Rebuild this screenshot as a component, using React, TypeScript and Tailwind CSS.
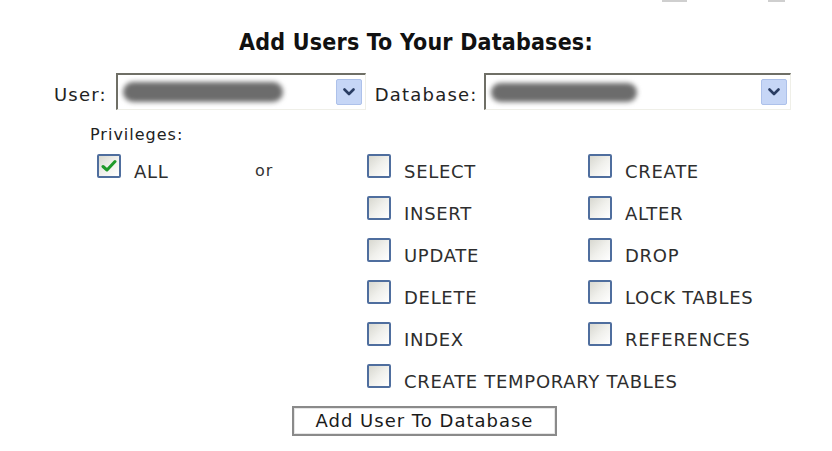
import React from "react";

const font = "[font-family:'DejaVu_Sans','Verdana',sans-serif]";

function Chevron() {
  return (
    <svg width="12" height="8" viewBox="0 0 12 8">
      <path d="M1.5 1.5 L6 6 L10.5 1.5" fill="none" stroke="#2a3d63" strokeWidth="2.6" strokeLinecap="round" strokeLinejoin="round" />
    </svg>
  );
}

function Select({ width, blob }: { width: string; blob: React.ReactNode }) {
  return (
    <div className={`relative h-[37px] ${width} bg-white border-t-2 border-l-2 border-r border-b border-t-[#6f6f66] border-l-[#6f6f66] border-r-[#efefe8] border-b-[#efefe8] flex items-center justify-between pl-[5px] pr-[3px]`}>
      {blob}
      <div className="w-[26px] h-[26px] bg-[#c6d6f6] border border-[#adc1ea] rounded-[2px] flex items-center justify-center">
        <Chevron />
      </div>
    </div>
  );
}

function Box({ checked }: { checked?: boolean }) {
  return (
    <div className="w-[24px] h-[24px] shrink-0 border-2 border-[#4f6e9e] rounded-[2px] bg-gradient-to-br from-[#d8d8d0] via-[#f0f0ec] to-white flex items-center justify-center">
      {checked && (
        <svg width="16" height="14" viewBox="0 0 16 14">
          <path d="M2 7.5 L6 11 L14 2.5" fill="none" stroke="#1f9a2a" strokeWidth="3" strokeLinecap="round" strokeLinejoin="round" />
        </svg>
      )}
    </div>
  );
}

function Item({ label, checked }: { label: string; checked?: boolean }) {
  return (
    <div className="flex items-start h-[42px]">
      <Box checked={checked} />
      <span className="ml-[13px] mt-[9px] text-[18px] leading-[18px] tracking-[0.7px] text-[#2e2e2e] whitespace-nowrap">{label}</span>
    </div>
  );
}

export default function App() {
  return (
    <div className={`relative w-[832px] h-[451px] bg-white overflow-hidden ${font}`}>
      <div className="absolute top-0 left-[662px] w-[25px] h-[2px] bg-[#cfcfcf]" />
      <div className="absolute top-0 left-[768px] w-[17px] h-[2px] bg-[#cfcfcf]" />

      <div className="pt-[28px] text-center">
        <h1 className="inline-block text-[23px] leading-[28px] font-bold font-stretch-condensed [font-family:'DejaVu_Sans_Condensed','DejaVu_Sans',sans-serif] text-[#111] tracking-[0.2px]">
          Add Users To Your Databases:
        </h1>
      </div>

      <div className="mt-[16px] flex items-center pl-[54px]">
        <span className="text-[18px] tracking-[1.2px] text-[#222] mt-[6px]">User:</span>
        <div className="ml-[9px]">
          <Select
            width="w-[250px]"
            blob={<div className="w-[160px] h-[20px] rounded-full bg-[#6c6c6c] blur-[2.5px]" />}
          />
        </div>
        <span className="ml-[9px] text-[18px] tracking-[1.2px] text-[#222] mt-[6px]">Database:</span>
        <div className="ml-[6px]">
          <Select
            width="w-[307px]"
            blob={<div className="w-[146px] h-[19px] rounded-full bg-[#6c6c6c] blur-[2.5px]" />}
          />
        </div>
      </div>

      <div className="mt-[16px] pl-[90px] text-[16px] leading-[18px] tracking-[1px] text-[#222]">Privileges:</div>

      <div className="mt-[10px] flex pl-[97px]">
        <div className="w-[158px]">
          <Item label="ALL" checked />
        </div>
        <div className="w-[112px] pt-[9px] text-[16px] leading-[16px] tracking-[1px] text-[#333]">or</div>
        <div className="w-[221px] flex flex-col">
          <Item label="SELECT" />
          <Item label="INSERT" />
          <Item label="UPDATE" />
          <Item label="DELETE" />
          <Item label="INDEX" />
          <Item label="CREATE TEMPORARY TABLES" />
        </div>
        <div className="flex flex-col">
          <Item label="CREATE" />
          <Item label="ALTER" />
          <Item label="DROP" />
          <Item label="LOCK TABLES" />
          <Item label="REFERENCES" />
        </div>
      </div>

      <div className="pl-[292px]">
        <button className="w-[265px] h-[30px] border-2 border-[#8a8a8a] bg-white text-[18px] leading-[18px] tracking-[1px] text-[#1a1a1a] flex items-center justify-center shadow-[inset_0_0_0_1px_#e6e6e6]">
          Add User To Database
        </button>
      </div>
    </div>
  );
}
